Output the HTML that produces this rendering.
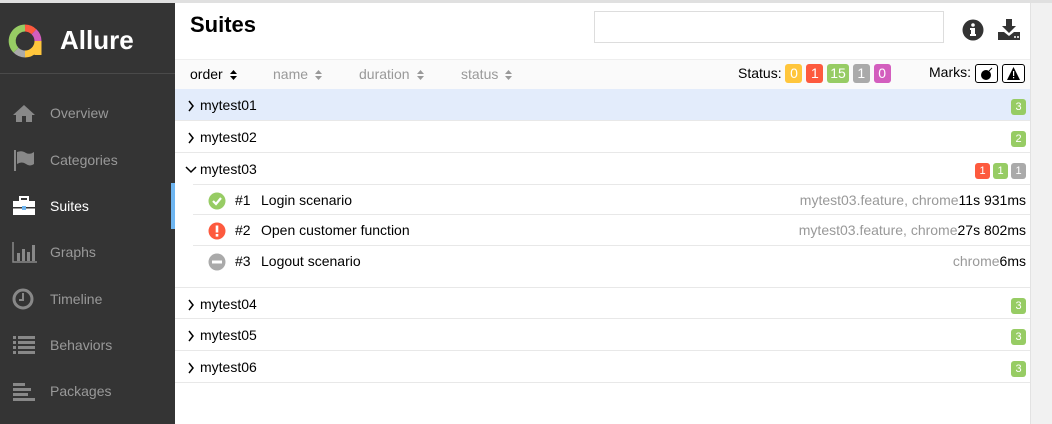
<!DOCTYPE html>
<html><head><style>
*{box-sizing:border-box;margin:0;padding:0}
body{width:1052px;height:424px;overflow:hidden;font-family:"Liberation Sans",Arial,sans-serif;font-size:14px;color:#000;background:#fff;position:relative}
.topb{position:absolute;left:0;top:0;width:1052px;height:3px;background:#e0e0e0}
.side{position:absolute;left:0;top:3px;width:175px;height:421px;background:#343434}
.logo{height:71px;border-bottom:1px solid #4a4a4a;position:relative}
.logo span{position:absolute;left:60px;top:22px;color:#fff;font-weight:bold;font-size:26px}
.nav{position:absolute;left:0;width:175px;height:46px;color:#999;font-size:14px}
.nav span{position:absolute;left:50px;top:15px}
.nav svg{position:absolute;left:12px;top:12px}
.nav.act{color:#fff}
.nav.act:after{content:"";position:absolute;right:0;top:0;width:4px;height:46px;background:#6eb5f0}
.scroll{position:absolute;left:1030px;top:3px;width:22px;height:421px;background:#f1f1f1;border-left:1px solid #e2e2e2}
.h1{position:absolute;left:190px;top:12px;font-size:22px;font-weight:bold}
.search{position:absolute;left:594px;top:11px;width:350px;height:32px;border:1px solid #ddd}
.tb{position:absolute;left:175px;top:59px;width:855px;height:30px;background:#fafafa;border-top:1px solid #eee}
.tb .c{position:absolute;top:6px;color:#999}
.tb .c svg{vertical-align:middle;margin-left:6px}
.b{display:inline-block;color:#fff;border-radius:3px;font-size:14px;text-align:center;line-height:19px;height:19px;padding:0 3px;min-width:17px}
.y{background:#ffc63c}.r{background:#fd5a3e}.g{background:#97cc64}.gr{background:#aaa}.p{background:#d35ebe}
.row{position:absolute;left:175px;width:855px;height:32px;border-bottom:1px solid #e8e8e8}
.row .n{position:absolute;left:25px;top:8px}
.row .ch{position:absolute;left:12px;top:11px}
.row .bd{position:absolute;right:4px;top:8px}
.row .bd .b{font-size:11px;height:16px;line-height:16px;min-width:15px;padding:0 3px;margin-left:3px}
.sub{position:absolute;left:193px;width:837px;height:31px;border-bottom:1px solid #e8e8e8}
.sub .n{position:absolute;left:42px;top:7px}
.sub .t{position:absolute;left:68px;top:7px}
.sub .r2{position:absolute;right:4px;top:7px;color:#000}
.sub .r2 i{font-style:normal;color:#999}
.sub svg{position:absolute;left:15px;top:7px}
.mk{display:inline-block;width:23px;height:19px;border:1px solid #000;border-radius:3px;vertical-align:middle;position:relative;background:#fff}
</style></head><body>
<div class="topb"></div>
<div class="side">
 <div class="logo">
  <svg width="34" height="34" viewBox="0 0 34 34" style="position:absolute;left:8px;top:21px">
   <path d="M17 4 A13 13 0 0 1 26 7.8" stroke="#fd5a3e" stroke-width="7" fill="none"/>
   <path d="M26 7.8 A13 13 0 0 1 30 17" stroke="#d35ebe" stroke-width="7" fill="none"/>
   <path d="M30 17 L30 31" stroke="#ffc63c" stroke-width="7" fill="none"/>
   <path d="M30 17 A13 13 0 0 1 17 30" stroke="#ffc63c" stroke-width="7" fill="none"/>
   <path d="M17 30 A13 13 0 0 1 8 26.2" stroke="#aaa" stroke-width="7" fill="none"/>
   <path d="M8 26.2 A13 13 0 0 1 17 4" stroke="#97cc64" stroke-width="7" fill="none"/>
  </svg>
  <span>Allure</span>
 </div>
 <div class="nav" style="top:87px"><svg width="24" height="22"><path d="M12 3 L1 13 H4 V20 H10 V14 H14 V20 H20 V13 H23 Z" fill="#888"/></svg><span>Overview</span></div>
 <div class="nav" style="top:134px"><svg width="24" height="22"><rect x="2" y="1" width="2" height="21" fill="#888"/><path d="M5 3 Q10 1 14 4 Q18 6 22 3 V15 Q18 18 14 15 Q10 12 5 15Z" fill="#888"/></svg><span>Categories</span></div>
 <div class="nav act" style="top:180px"><svg width="24" height="22"><rect x="8" y="2" width="8" height="4" fill="none" stroke="#fff" stroke-width="2"/><rect x="1" y="6" width="22" height="14" fill="#fff"/><rect x="1" y="12" width="22" height="1.5" fill="#343434"/><rect x="10" y="11" width="4" height="4" fill="#6eb5f0"/></svg><span>Suites</span></div>
 <div class="nav" style="top:226px"><svg width="26" height="22"><path d="M1 1 V21 H25" stroke="#888" stroke-width="1.5" fill="none"/><rect x="5" y="12" width="3" height="8" fill="#888"/><rect x="10" y="8" width="3" height="12" fill="#888"/><rect x="15" y="11" width="3" height="9" fill="#888"/><rect x="20" y="4" width="3" height="16" fill="#888"/></svg><span>Graphs</span></div>
 <div class="nav" style="top:273px"><svg width="24" height="22"><circle cx="11" cy="11" r="9" stroke="#888" stroke-width="3" fill="none"/><path d="M11 5 V12 H7" stroke="#888" stroke-width="2" fill="none"/></svg><span>Timeline</span></div>
 <div class="nav" style="top:319px"><svg width="24" height="22"><g fill="#888"><rect x="1" y="2" width="3" height="3"/><rect x="6" y="2" width="17" height="3"/><rect x="1" y="7" width="3" height="3"/><rect x="6" y="7" width="17" height="3"/><rect x="1" y="12" width="3" height="3"/><rect x="6" y="12" width="17" height="3"/><rect x="1" y="17" width="3" height="3"/><rect x="6" y="17" width="17" height="3"/></g></svg><span>Behaviors</span></div>
 <div class="nav" style="top:365px"><svg width="24" height="22"><g fill="#888"><rect x="1" y="3" width="12" height="3"/><rect x="1" y="8" width="18" height="3"/><rect x="1" y="13" width="15" height="3"/><rect x="1" y="18" width="22" height="3"/></g></svg><span>Packages</span></div>
</div>
<div class="h1">Suites</div>
<div class="search"></div>
<svg width="22" height="22" style="position:absolute;left:962px;top:19px"><circle cx="11" cy="11" r="10.5" fill="#333"/><rect x="9" y="9" width="4" height="8" fill="#fff"/><rect x="8" y="9" width="3" height="2" fill="#fff"/><rect x="8" y="15" width="6" height="2" fill="#fff"/><circle cx="11" cy="6" r="1.8" fill="#fff"/></svg>
<svg width="24" height="22" style="position:absolute;left:997px;top:18px"><path d="M9 1 H15 V8 H19 L12 15 L5 8 H9Z" fill="#333"/><path d="M1 14 H7 L12 18 L17 14 H23 V22 H1Z" fill="#333"/><circle cx="18" cy="19" r="1" fill="#fff"/><circle cx="21" cy="19" r="1" fill="#fff"/></svg>
<div class="scroll"></div>
<div class="tb">
 <span class="c" style="left:15px;color:#000">order<svg width="9" height="12"><path d="M1 5 L4.5 1 L8 5Z M1 7 L4.5 11 L8 7Z" fill="#000"/></svg></span>
 <span class="c" style="left:98px">name<svg width="9" height="12"><path d="M1 5 L4.5 1 L8 5Z M1 7 L4.5 11 L8 7Z" fill="#999"/></svg></span>
 <span class="c" style="left:184px">duration<svg width="9" height="12"><path d="M1 5 L4.5 1 L8 5Z M1 7 L4.5 11 L8 7Z" fill="#999"/></svg></span>
 <span class="c" style="left:286px">status<svg width="9" height="12"><path d="M1 5 L4.5 1 L8 5Z M1 7 L4.5 11 L8 7Z" fill="#999"/></svg></span>
 <span class="c" style="left:563px;top:4px;color:#000">Status: <span class="b y">0</span> <span class="b r">1</span> <span class="b g">15</span> <span class="b gr">1</span> <span class="b p">0</span></span>
 <span class="c" style="left:754px;top:4px;color:#000">Marks: <span class="mk"><svg width="21" height="17" style="position:absolute;left:0;top:0;margin:0"><circle cx="10" cy="10" r="5" fill="#000"/><path d="M13 6 L16 3" stroke="#000" stroke-width="1"/></svg></span> <span class="mk"><svg width="21" height="17" style="position:absolute;left:0;top:0;margin:0"><path d="M10.5 2 L17 15 H4Z" fill="#000"/><rect x="10" y="6" width="1.2" height="5" fill="#fff"/><rect x="10" y="12" width="1.2" height="1.3" fill="#fff"/></svg></span></span>
</div>
<div class="row" style="top:89px;background:#e3ecfb"><svg class="ch" width="8" height="12"><path d="M2 1 L6 6 L2 11" stroke="#000" stroke-width="1.5" fill="none"/></svg><span class="n">mytest01</span><span class="bd"><span class="b g">3</span></span></div>
<div class="row" style="top:121px"><svg class="ch" width="8" height="12"><path d="M2 1 L6 6 L2 11" stroke="#000" stroke-width="1.5" fill="none"/></svg><span class="n">mytest02</span><span class="bd"><span class="b g">2</span></span></div>
<div class="row" style="top:153px;border-bottom:none"><svg class="ch" width="12" height="10" style="left:10px;top:12px"><path d="M1 2 L6 7 L11 2" stroke="#000" stroke-width="1.5" fill="none"/></svg><span class="n">mytest03</span><span class="bd"><span class="b r">1</span><span class="b g">1</span><span class="b gr">1</span></span></div>
<div class="sub" style="top:184px;border-top:1px solid #e8e8e8"><svg width="18" height="18"><circle cx="9" cy="9" r="8.5" fill="#97cc64"/><path d="M5 9 L8 12 L13 6" stroke="#fff" stroke-width="2.2" fill="none"/></svg><span class="n">#1</span><span class="t">Login scenario</span><span class="r2"><i>mytest03.feature, chrome</i>11s 931ms</span></div>
<div class="sub" style="top:215px"><svg width="18" height="18"><circle cx="9" cy="9" r="8.5" fill="#fd5a3e"/><rect x="7.7" y="3.5" width="2.6" height="7" fill="#fff"/><rect x="7.7" y="12" width="2.6" height="2.6" fill="#fff"/></svg><span class="n">#2</span><span class="t">Open customer function</span><span class="r2"><i>mytest03.feature, chrome</i>27s 802ms</span></div>
<div class="sub" style="top:246px;border-bottom:none"><svg width="18" height="18"><circle cx="9" cy="9" r="8.5" fill="#aaa"/><rect x="4" y="7.5" width="10" height="3" fill="#fff"/></svg><span class="n">#3</span><span class="t">Logout scenario</span><span class="r2"><i>chrome</i>6ms</span></div>
<div class="row" style="top:287px;border-top:1px solid #e8e8e8"><svg class="ch" width="8" height="12"><path d="M2 1 L6 6 L2 11" stroke="#000" stroke-width="1.5" fill="none"/></svg><span class="n">mytest04</span><span class="bd"><span class="b g">3</span></span></div>
<div class="row" style="top:319px"><svg class="ch" width="8" height="12"><path d="M2 1 L6 6 L2 11" stroke="#000" stroke-width="1.5" fill="none"/></svg><span class="n">mytest05</span><span class="bd"><span class="b g">3</span></span></div>
<div class="row" style="top:351px"><svg class="ch" width="8" height="12"><path d="M2 1 L6 6 L2 11" stroke="#000" stroke-width="1.5" fill="none"/></svg><span class="n">mytest06</span><span class="bd"><span class="b g">3</span></span></div>
</body></html>
